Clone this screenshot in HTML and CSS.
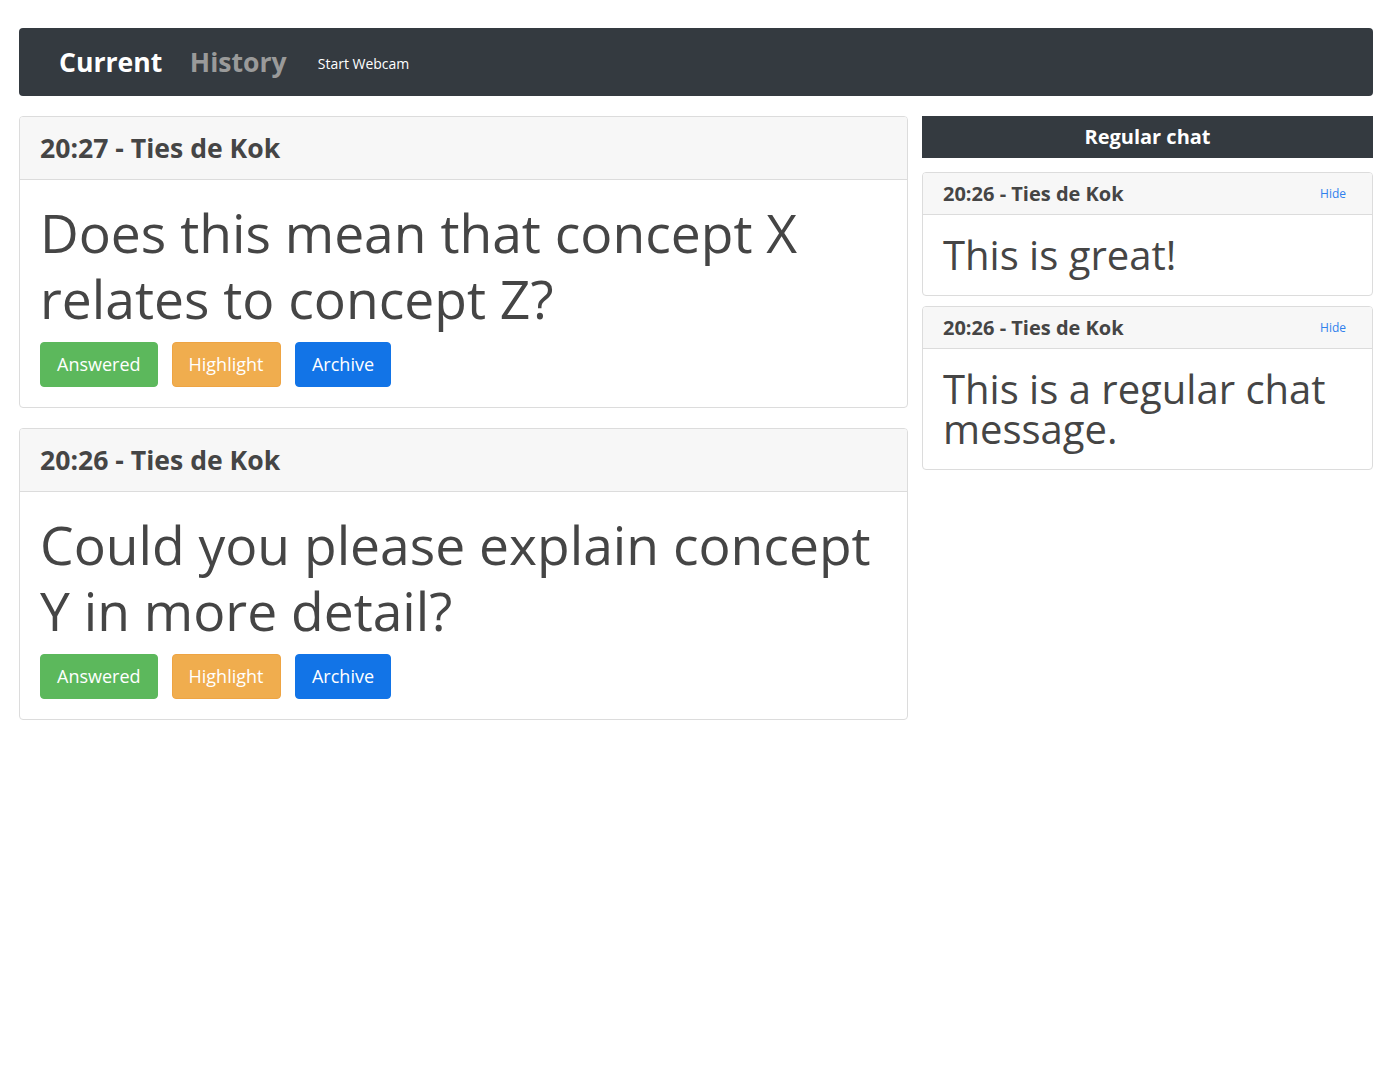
FILE: index.html
```html
<!DOCTYPE html>
<html>
<head>
<meta charset="utf-8">
<link rel="stylesheet" href="styles.css">
</head>
<body>
<div class="page">
  <nav class="navbar">
    <a class="nav-brand active">Current</a>
    <a class="nav-brand muted">History</a>
    <a class="nav-link">Start Webcam</a>
  </nav>
  <div class="layout">
    <main class="questions">
      <section class="card">
        <header class="card-header">20:27 - Ties de Kok</header>
        <div class="card-body">
          <h1 class="question">Does this mean that concept X relates to concept Z?</h1>
          <div class="actions">
            <button class="btn btn-green">Answered</button>
            <button class="btn btn-orange">Highlight</button>
            <button class="btn btn-blue">Archive</button>
          </div>
        </div>
      </section>
      <section class="card">
        <header class="card-header">20:26 - Ties de Kok</header>
        <div class="card-body">
          <h1 class="question">Could you please explain concept Y in more detail?</h1>
          <div class="actions">
            <button class="btn btn-green">Answered</button>
            <button class="btn btn-orange">Highlight</button>
            <button class="btn btn-blue">Archive</button>
          </div>
        </div>
      </section>
    </main>
    <aside class="chat">
      <div class="chat-title">Regular chat</div>
      <section class="card chat-card">
        <header class="chat-header"><span>20:26 - Ties de Kok</span><a class="hide">Hide</a></header>
        <div class="chat-body">This is great!</div>
      </section>
      <section class="card chat-card">
        <header class="chat-header"><span>20:26 - Ties de Kok</span><a class="hide">Hide</a></header>
        <div class="chat-body">This is a regular chat message.</div>
      </section>
    </aside>
  </div>
</div>
</body>
</html>
```
FILE: styles.css
```css
* { box-sizing: border-box; }
body {
  margin: 0;
  font-family: "Open Sans", "Liberation Sans", sans-serif;
  color: #454545;
  background: #fff;
}
.page {
  padding: 28px 16px 0 19px;
}
.navbar {
  background: #343a40;
  border-radius: 4px;
  height: 68px;
  display: flex;
  align-items: center;
  padding: 0 0 0 40px;
}
.nav-brand {
  font-size: 26.6px;
  font-weight: 700;
  line-height: 34px;
  margin-right: 27.5px;
  padding-bottom: 1px;
}
.nav-brand.active { color: #fff; }
.nav-brand.muted { color: #9a9a9a; margin-right: 31px; }
.nav-link {
  color: #fff;
  font-size: 14px;
  padding-top: 2px;
}
.layout {
  display: flex;
  gap: 14px;
  margin-top: 20px;
  align-items: flex-start;
}
.questions {
  width: 889px;
  display: flex;
  flex-direction: column;
  gap: 20px;
}
.chat {
  flex: 1;
  display: flex;
  flex-direction: column;
  gap: 10px;
}
.card {
  border: 1px solid #dcdcdc;
  border-radius: 4px;
  background: #fff;
  overflow: hidden;
}
.card-header {
  background: #f7f7f7;
  border-bottom: 1px solid #dcdcdc;
  padding: 13px 20px;
  font-size: 26.6px;
  font-weight: 700;
  line-height: 36px;
}
.card-body {
  padding: 20px 20px 20px 20px;
}
.question {
  margin: 0 0 10px;
  font-size: 53.4px;
  font-weight: 400;
  line-height: 66px;
}
.actions {
  display: flex;
  gap: 14px;
}
.btn {
  font-family: inherit;
  font-size: 18px;
  line-height: 27px;
  padding: 8px 16px;
  border: 1px solid transparent;
  border-radius: 4px;
  color: #fff;
}
.btn-green { background: #5cb85c; border-color: #5cb85c; }
.btn-orange { background: #f0ad4e; border-color: #eea443; padding-right: 16.5px; }
.btn-blue { background: #1274e7; border-color: #1274e7; }
.chat-title {
  background: #343a40;
  color: #fff;
  text-align: center;
  font-weight: 700;
  font-size: 20px;
  line-height: 42px;
  height: 42px;
  margin-bottom: 4px;
}
.chat-header {
  background: #f7f7f7;
  border-bottom: 1px solid #dcdcdc;
  padding: 8px 26px 8px 20px;
  display: flex;
  justify-content: space-between;
  align-items: center;
  font-size: 20px;
  font-weight: 700;
  line-height: 25px;
}
.hide {
  color: #2f80ed;
  font-size: 12px;
  font-weight: 400;
}
.chat-body {
  padding: 20px;
  font-size: 40px;
  line-height: 40px;
}
```
